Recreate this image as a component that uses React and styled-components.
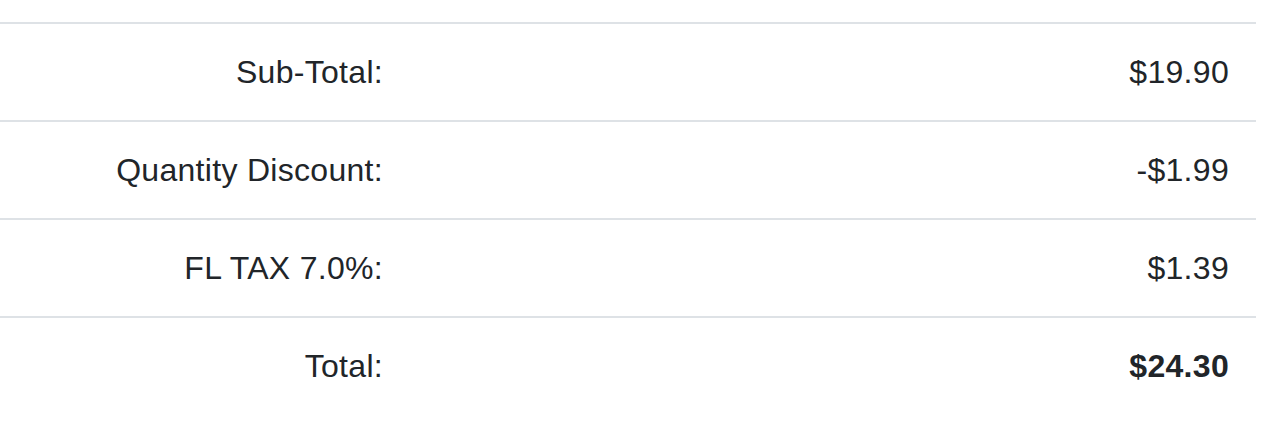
import React from 'react'
import styled, { createGlobalStyle } from 'styled-components'

const GlobalStyle = createGlobalStyle`
  html, body {
    margin: 0;
    padding: 0;
    background: #fff;
  }

  body {
    font-family: "Liberation Sans", Arial, sans-serif;
    color: #212529;
  }
`

const Wrapper = styled.div`
  padding-top: 22px;
  width: 1256px;
`

const Totals = styled.div`
  display: grid;
  grid-template-columns: 407px 1fr;
`

const Cell = styled.div`
  border-top: 2px solid #dee2e6;
  padding: 24px ${props => props.value ? '27px' : '24px'} 24px 24px;
  font-size: 32px;
  line-height: 48px;
  letter-spacing: 0.3px;
  text-align: right;
  font-weight: ${props => props.strong ? 700 : 400};
`

const rows = [
  { label: 'Sub-Total:', value: '$19.90' },
  { label: 'Quantity Discount:', value: '-$1.99' },
  { label: 'FL TAX 7.0%:', value: '$1.39' },
  { label: 'Total:', value: '$24.30', strong: true }
]

export default function App () {
  return (
    <Wrapper>
      <GlobalStyle />
      <Totals>
        {rows.map(row => (
          <React.Fragment key={row.label}>
            <Cell>{row.label}</Cell>
            <Cell value strong={row.strong}>{row.value}</Cell>
          </React.Fragment>
        ))}
      </Totals>
    </Wrapper>
  )
}
